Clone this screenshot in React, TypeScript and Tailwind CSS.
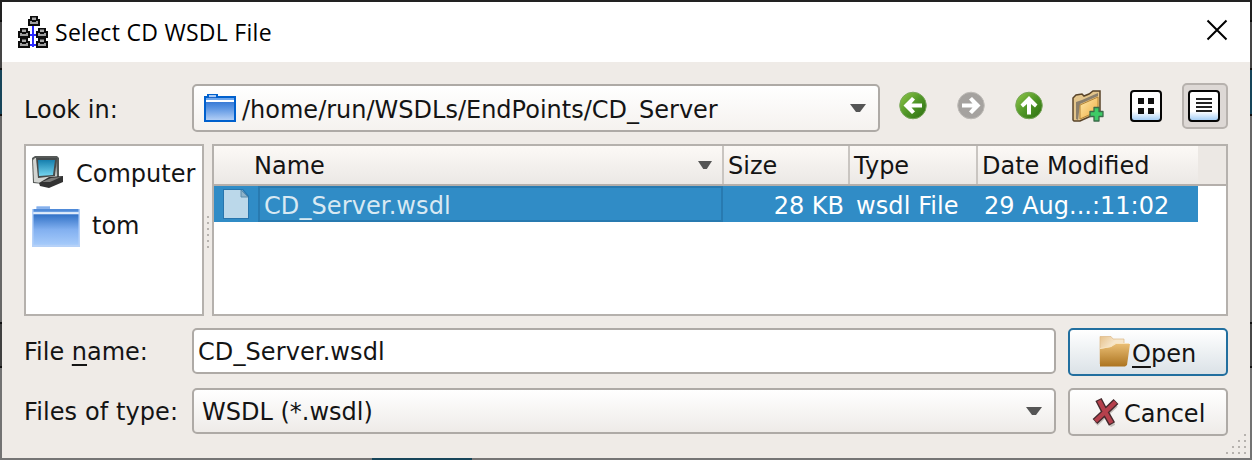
import React from "react";

function Folder({ w, h, soft }: { w: number; h: number; soft?: boolean }) {
  return (
    <svg width={w} height={h} viewBox="0 0 32 28" preserveAspectRatio="none" className="shrink-0">
      <defs>
        <linearGradient id="fb" x1="0" y1="0" x2="0" y2="1">
          <stop offset="0.1" stopColor="#2068cc" />
          <stop offset="0.5" stopColor="#5a94e2" />
          <stop offset="1" stopColor="#b9d3f7" />
        </linearGradient>
        <linearGradient id="fs" x1="0" y1="0" x2="0" y2="1">
          <stop offset="0" stopColor="#3171c6" />
          <stop offset="0.5" stopColor="#82b0f0" />
          <stop offset="1" stopColor="#a5cafa" />
        </linearGradient>
      </defs>
      {soft ? (
        <>
          <path d="M0 2H3V0H12V2H32V28H0Z" fill="#b5d1f8" />
          <path d="M3 0.500H12V2H3Z" fill="#86b0ea" />
          <path d="M1 2H31V4H1Z" fill="#4f8ad8" />
          <path d="M1 4.300H31V5.600H1Z" fill="#e2ecfa" />
          <rect x="1" y="5.700" width="30" height="20.800" fill="url(#fs)" />
        </>
      ) : (
        <>
          <path d="M1 3H4V1H13V3H31V27H1Z" fill="url(#fb)" stroke="#0060cd" strokeWidth="2" />
          <path d="M5 1H12V3H5Z" fill="#a9c9f3" />
          <path d="M2 4H30V6H2Z" fill="#6ea6ec" />
          <path d="M2 6H30V8H2Z" fill="#fff" />
        </>
      )}
    </svg>
  );
}

function NetworkIcon() {
  const node = (x: number, y: number) => (
    <g key={`${x}-${y}`} transform={`translate(${x} ${y})`}>
      <path d="M2 0H10V3H12V10H0V3H2Z" fill="#0c0c0c" />
      <path d="M4 1.500H8V4H4Z" fill="#a8a8a8" />
      <path d="M2 5H4V6H8V5H10V8H2Z" fill="#a0a0a0" />
    </g>
  );
  return (
    <svg width="30" height="32" viewBox="0 0 30 32" className="shrink-0">
      <path d="M15 9V31M9 19H21M10 29H20" stroke="#2a2aff" strokeWidth="2" />
      {[[10, 0], [0, 12], [18, 12], [0, 22], [18, 22]].map(([x, y]) => node(x, y))}
    </svg>
  );
}

function RoundArrow({ rotate, grey }: { rotate: number; grey?: boolean }) {
  return (
    <svg width="28" height="30" viewBox="0 0 28 30" className="shrink-0">
      <defs>
        <linearGradient id="ga" x1="0" y1="0" x2="1" y2="1">
          <stop offset="0.1" stopColor="#86bf44" />
          <stop offset="0.5" stopColor="#509627" />
          <stop offset="1" stopColor="#2b6d10" />
        </linearGradient>
      </defs>
      <circle cx="14" cy="14.500" r="13.300" fill={grey ? "#a5a29f" : "url(#ga)"} stroke={grey ? "#bebbb7" : "#78a65a"} strokeWidth="1" />
      <path d="M4.500 14.500L13 6L16 8.500L12.500 12.500H23V16.500H12.500L16 20.500L13 23Z" fill="#fff" transform={`rotate(${rotate} 14 14.500)`} />
    </svg>
  );
}

function NewFolder() {
  return (
    <svg width="32" height="32" viewBox="0 0 32 32" className="shrink-0">
      <defs>
        <linearGradient id="nf" x1="0" y1="0" x2="1" y2="1">
          <stop offset="0" stopColor="#ffe9ab" />
          <stop offset="1" stopColor="#f0ad42" />
        </linearGradient>
      </defs>
      <path d="M1 8L4 5L10 4L12 6L17 4L21 1L28 1V22L8 31H2L1 30Z" fill="#e3c58c" stroke="#59442a" strokeWidth="1.500" />
      <path d="M4 12L10 10L26 3V6L8 14L6 30L4 29Z" fill="#8b7f6b" />
      <path d="M8 15L26 7V21L8 29Z" fill="url(#nf)" stroke="#b58435" strokeWidth="1" />
      <path d="M22 17.500H27V21.500H31V26.500H27V31H22V26.500H18V21.500H22Z" fill="#3ecb66" stroke="#3b6b49" strokeWidth="1.300" strokeLinejoin="round" />
    </svg>
  );
}

function ViewIcon({ list }: { list?: boolean }) {
  return (
    <svg width="32" height="32" viewBox="0 0 32 32" className="shrink-0">
      <defs>
        <linearGradient id="vw" x1="0" y1="0" x2="0" y2="1">
          <stop offset="0.68" stopColor="#fff" />
          <stop offset="1" stopColor="#9ccaf5" />
        </linearGradient>
      </defs>
      <rect x="1" y="1" width="30" height="30" rx="3" fill="url(#vw)" stroke="#050505" strokeWidth="2" />
      {list ? (
        <path d="M8 9H24M8 13H24M8 17H24M8 21H24" stroke="#222" strokeWidth="2" />
      ) : (
        <path d="M8 8H14V14H8ZM18 8H24V14H18ZM8 18H14V24H8ZM18 18H24V24H18Z" fill="#111" />
      )}
    </svg>
  );
}

function ComputerIcon() {
  return (
    <svg width="32" height="32" viewBox="0 0 32 32" className="shrink-0">
      <defs>
        <linearGradient id="sc" x1="0" y1="0" x2="0" y2="1">
          <stop offset="0" stopColor="#167fae" />
          <stop offset="1" stopColor="#75d5ef" />
        </linearGradient>
      </defs>
      <path d="M0 2L3 0H25L27 2V23L12 28L1 27Z" fill="#555957" />
      <path d="M1 4L3 2H24L25 22L9 27L2 26Z" fill="#d3d5d2" />
      <path d="M4 2H25L23 20L6 22Z" fill="#454a4a" />
      <path d="M6 4H23L21 19L7 20Z" fill="url(#sc)" />
      <path d="M7 27L17 21L31 20V26L17 32L8 30Z" fill="#333" />
      <path d="M10 26L19 22L29 21L18 26Z" fill="#7b7b79" />
    </svg>
  );
}

function FileIcon() {
  return (
    <svg width="28" height="32" viewBox="0 0 28 32" className="shrink-0">
      <path d="M1 1H21L27 8V31H1Z" fill="#2775ad" />
      <path d="M2 2H20L26 9V30H2Z" fill="#bbd8ea" />
      <path d="M19 2L26 9H19Z" fill="#8fb3ca" stroke="#5b8baa" />
    </svg>
  );
}

function OpenIcon() {
  return (
    <svg width="32" height="32" viewBox="0 0 32 32" className="shrink-0">
      <defs>
        <linearGradient id="oi" x1="0" y1="0" x2="0" y2="1">
          <stop offset="0" stopColor="#e9bd73" />
          <stop offset="1" stopColor="#ac7420" />
        </linearGradient>
        <linearGradient id="ob" x1="0" y1="0" x2="1" y2="1">
          <stop offset="0" stopColor="#e6c18a" />
          <stop offset="0.4" stopColor="#f6e6cb" />
        </linearGradient>
      </defs>
      <path d="M1 0.500H12L14 3H25V28H1Z" fill="url(#ob)" stroke="#dcb785" strokeWidth="0.700" />
      <path d="M1 13L12 11L17 8H31L28 29L26 30.500H1Z" fill="url(#oi)" />
      <path d="M1 12.500L12 10.500L16 7.500H30" stroke="#f8e3bd" fill="none" />
    </svg>
  );
}

function CancelIcon() {
  return (
    <svg width="28" height="30" viewBox="0 0 28 30" className="shrink-0">
      <path d="M4 27L24 8M8 5L21 29" stroke="#c4bfbb" strokeWidth="5" />
      <path d="M3 24.500L11 17L24 4.500M6.500 2.500L12 13L20 27" stroke="#45292d" strokeWidth="7" />
      <path d="M3.500 24L11 17L23.500 5M7 3.500L12 13L19.500 26" stroke="#b5404c" strokeWidth="4.200" />
    </svg>
  );
}

function Caret({ w = 16 }: { w?: number }) {
  return (
    <svg width={w} height="8" viewBox="0 0 16 8" preserveAspectRatio="none" className="shrink-0">
      <path d="M0 0H16L10 8H6Z" fill="#555" />
    </svg>
  );
}

function Edge({ right }: { right?: boolean }) {
  return (
    <div className="flex w-0.5 shrink-0 flex-col">
      <div className="h-[18px] bg-[#222]" />
      <div className="h-0.5 bg-[#0c0c0c]" />
      <div className="h-[46px] bg-[#454545]" />
      <div className="h-0.5 bg-[#111]" />
      <div className="h-11 bg-[#17455a]" />
      <div className="h-0.5 bg-[#111]" />
      <div className="h-[206px] bg-[#676767]" />
      <div className="h-0.5 bg-[#111]" />
      <div className={right ? "h-[42px] bg-[#484848]" : "h-[42px] bg-[#404040]"} />
      <div className="h-0.5 bg-[#111]" />
      <div className="grow bg-[#737373]" />
    </div>
  );
}

const text = "whitespace-pre pt-[3px] leading-[30px]";
const raised = "whitespace-pre pt-px leading-[30px]";
const frame = "rounded-[5px] border-2 border-[#aeaaa6]";

export default function App() {
  return (
    <div className="flex h-[460px] w-[1252px] flex-col overflow-hidden bg-[#efebe7] font-['DejaVu_Sans',sans-serif] text-[24px] text-[#141414]">
      <div className="h-0.5 shrink-0 bg-[#222]" />
      <div className="flex h-[456px] shrink-0">
        <Edge />
        <div className="flex w-[1248px] flex-col">
          <header className="flex h-[60px] shrink-0 items-center bg-white pl-4 pr-[22px] text-black">
            <NetworkIcon />
            <h1 className="ml-[7px] grow whitespace-pre font-['Open_Sans',sans-serif] text-[23px] leading-8 tracking-[0.28px]">Select CD WSDL File</h1>
            <svg width="22" height="22" viewBox="0 0 22 22" className="mb-1">
              <path d="M1.500 1.500L20.500 20.500M20.500 1.500L1.500 20.500" stroke="#000" strokeWidth="2" />
            </svg>
          </header>
          <main className="flex flex-col px-[22px] pt-[22px]">
            <div className="flex h-12 items-center">
              <span className={`${text} w-[168px]`}>Look in:</span>
              <div className={`${frame} flex h-12 w-[688px] items-center bg-linear-to-b from-white to-[#f5f2ef] pl-2.5 pr-3`}>
                <Folder w={32} h={28} />
                <span className={`${text} ml-1.5 grow`}>/home/run/WSDLs/EndPoints/CD_Server</span>
                <Caret />
              </div>
              <div className="mb-1 ml-[19px] flex items-center">
                <RoundArrow rotate={0} />
                <span className="w-[30px]" />
                <RoundArrow rotate={180} grey />
                <span className="w-[30px]" />
                <RoundArrow rotate={90} />
                <span className="w-[29px]" />
                <NewFolder />
                <span className="w-[26px]" />
                <ViewIcon />
              </div>
              <div className="mb-1 ml-5 flex h-[46px] w-[46px] items-center justify-center rounded-[5px] border-2 border-[#b7b2ae] bg-[#ddd8d5] pr-0.5">
                <ViewIcon list />
              </div>
            </div>
            <div className="mt-3 flex h-[172px]">
              <aside className="w-[180px] shrink-0 border-2 border-[#b5b1ad] bg-white pl-1.5 pt-2">
                <div className="flex h-9 items-center">
                  <ComputerIcon />
                  <span className={`${text} ml-3`}>Computer</span>
                </div>
                <div className="mt-3.5 flex h-11 items-center">
                  <Folder w={48} h={41} soft />
                  <span className="ml-3 whitespace-pre leading-[30px]">tom</span>
                </div>
              </aside>
              <div className="flex w-2 flex-col items-center gap-1 pt-[72px]">
                {[0, 1, 2, 3, 4, 5].map((i) => <i key={i} className="size-0.5 shrink-0 bg-[#b6b2ae]" />)}
              </div>
              <section className="flex grow flex-col border-2 border-[#b5b1ad] bg-white">
                <div className="flex h-10 shrink-0 items-center border-b-2 border-[#b4afab] bg-linear-to-b from-[#fcf9f6] to-[#ebe8e5]">
                  <div className="flex h-full w-[510px] items-center border-r-2 border-[#c9c5c1] pl-10 pr-2.5">
                    <span className={`${raised} grow`}>Name</span>
                    <Caret w={14} />
                  </div>
                  <div className="flex h-full w-[126px] items-center border-r-2 border-[#c9c5c1] pl-1"><span className={raised}>Size</span></div>
                  <div className="flex h-full w-32 items-center border-r-2 border-[#c9c5c1] pl-1"><span className={raised}>Type</span></div>
                  <div className="flex h-full w-[220px] items-center pl-1"><span className={raised}>Date Modified</span></div>
                  <div className="h-full grow bg-[#ece8e4]" />
                </div>
                <div className="flex h-9 w-[984px] items-center bg-[#308cc6] text-white">
                  <span className="w-2" />
                  <FileIcon />
                  <div className="ml-2 flex h-9 w-[465px] items-center border-2 border-[#287ab0] pl-1 text-[#d8e9f3]"><span className={`${text} tracking-[0.1px]`}>CD_Server.wsdl</span></div>
                  <span className={`${text} w-[121px] text-right`}>28 KB</span>
                  <span className={`${text} ml-3 w-32 tracking-[0.1px]`}>wsdl File</span>
                  <span className={text}>29 Aug...:11:02</span>
                </div>
              </section>
            </div>
            <div className="mt-3 flex h-12 items-start">
              <span className={`${text} mt-1.5 w-[168px]`}>File <span className="underline decoration-2 underline-offset-4">n</span>ame:</span>
              <div className={`${frame} flex h-[46px] w-[864px] items-center bg-white pl-1`}><span className={`${raised} tracking-[0.1px]`}>CD_Server.wsdl</span></div>
              <button className="ml-3 flex h-12 w-40 items-center rounded-[5px] border-2 border-[#226f9f] bg-linear-to-b from-white to-[#dbe2e7] pl-[29px]">
                <OpenIcon />
                <span className={`${text} ml-px`}><span className="underline decoration-2 underline-offset-4">O</span>pen</span>
              </button>
            </div>
            <div className="mt-3 flex h-12 items-start">
              <span className={`${text} mt-1.5 w-[168px] tracking-[0.1px]`}>Files of type:</span>
              <div className={`${frame} flex h-[46px] w-[864px] items-center bg-linear-to-b from-white to-[#eeebe8] pl-2 pr-3`}>
                <span className={`${raised} grow`}>WSDL (*.wsdl)</span>
                <Caret />
              </div>
              <button className={`${frame} ml-3 flex h-12 w-40 items-center bg-linear-to-b from-white to-[#eeebe8] pl-[22px]`}>
                <CancelIcon />
                <span className={`${text} ml-1`}>Cancel</span>
              </button>
            </div>
            <div className="-mr-[18px] -mt-0.5 flex flex-col items-end gap-1">
              {[1, 2, 3, 4].map((n) => (
                <div key={n} className="flex gap-1">
                  {Array.from({ length: n }, (_, i) => <i key={i} className="size-0.5 bg-[#b6b2ae]" />)}
                </div>
              ))}
            </div>
          </main>
        </div>
        <Edge right />
      </div>
      <div className="flex h-0.5 shrink-0 bg-[#757575]"><div className="ml-[372px] w-[100px] bg-[#17455a]" /></div>
    </div>
  );
}
